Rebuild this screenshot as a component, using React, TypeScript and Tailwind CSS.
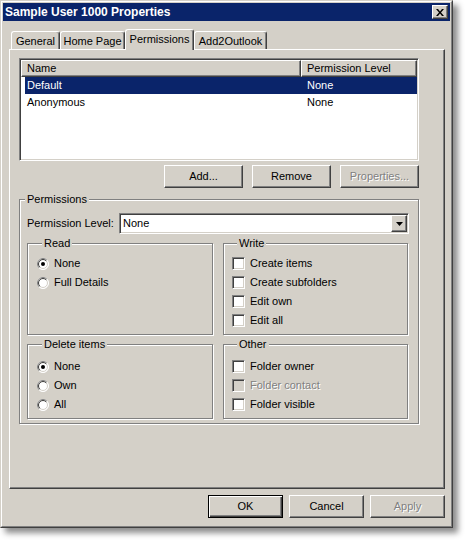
import React from 'react';

// classic 3D bevels
const raised =
  'border border-t-white border-l-white border-r-[#404040] border-b-[#404040] shadow-[inset_-1px_-1px_0_#808080]';
const sunken =
  'border border-t-[#808080] border-l-[#808080] border-r-white border-b-white shadow-[inset_1px_1px_0_#404040,inset_-1px_-1px_0_#d4d0c8]';
const disabledText = 'text-[#808080] [text-shadow:1px_1px_0_#fff]';

interface ButtonProps {
  label: string;
  width: string;
  disabled?: boolean;
  isDefault?: boolean;
}

const Button: React.FC<ButtonProps> = ({ label, width, disabled, isDefault }) => (
  <div
    className={`flex h-[23px] items-center justify-center ${width} ${
      isDefault
        ? 'border border-black shadow-[inset_1px_1px_0_#fff,inset_-1px_-1px_0_#404040,inset_-2px_-2px_0_#808080]'
        : raised
    }`}
  >
    <span className={disabled ? disabledText : ''}>{label}</span>
  </div>
);

const Radio: React.FC<{ label: string; checked?: boolean }> = ({ label, checked }) => (
  <div className="flex h-[19px] items-center gap-[5px]">
    <svg width="12" height="12" viewBox="0 0 12 12" className="shrink-0">
      <circle cx="6" cy="6" r="5.5" fill="#fff" stroke="#fff" />
      <path d="M2.1 9.9 A5.5 5.5 0 0 1 9.9 2.1" fill="none" stroke="#808080" />
      <circle cx="6" cy="6" r="4.5" fill="#fff" stroke="#d4d0c8" />
      <path d="M2.8 9.2 A4.5 4.5 0 0 1 9.2 2.8" fill="none" stroke="#404040" />
      {checked && <circle cx="6" cy="6" r="2" fill="#000" />}
    </svg>
    <span>{label}</span>
  </div>
);

const Check: React.FC<{ label: string; disabled?: boolean }> = ({ label, disabled }) => (
  <div className="flex h-[19px] items-center gap-[5px]">
    <div className={`h-[13px] w-[13px] shrink-0 ${sunken} ${disabled ? 'bg-[#d4d0c8]' : 'bg-white'}`} />
    <span className={disabled ? disabledText : ''}>{label}</span>
  </div>
);

const Group: React.FC<{ title: string; className?: string; children: React.ReactNode }> = ({
  title,
  className = '',
  children,
}) => (
  <fieldset
    className={`border border-[#808080] shadow-[inset_1px_1px_0_#fff,1px_1px_0_#fff] ${className}`}
  >
    <legend className="ml-[5px] bg-[#d4d0c8] px-[2px] leading-[13px]">{title}</legend>
    {children}
  </fieldset>
);

const tabs = [
  { name: 'General', w: 'w-[49px]' },
  { name: 'Home Page', w: 'w-[65px]' },
  { name: 'Permissions', w: 'w-[69px]', active: true },
  { name: 'Add2Outlook', w: 'w-[73px]' },
];

const rows = [
  { name: 'Default', level: 'None', selected: true },
  { name: 'Anonymous', level: 'None' },
];

export default function App() {
  return (
    <div className="h-[540px] w-[466px] bg-white font-['Liberation_Sans',Arial,sans-serif] text-[11px] text-black">
      <div className="flex h-[528px] w-[453px] flex-col border border-[#d4d0c8] border-r-[#404040] border-b-[#404040] bg-[#d4d0c8] shadow-[5px_5px_6px_rgba(0,0,0,0.45)]">
        <div className="flex flex-1 flex-col border border-white border-r-[#808080] border-b-[#808080] p-px">
          {/* Title bar */}
          <div className="flex h-[18px] items-center justify-between bg-[#0a246a] pl-[2px] pr-[2px]">
            <span className="text-[12px] font-bold text-white">Sample User 1000 Properties</span>
            <div className={`flex h-[14px] w-[16px] items-center justify-center bg-[#d4d0c8] ${raised}`}>
              <svg width="8" height="7" viewBox="0 0 8 7">
                <path d="M0 0h2l2 2.5L6 0h2L5 3.5 8 7H6L4 4.5 2 7H0l3-3.5z" fill="#000" />
              </svg>
            </div>
          </div>

          {/* Tabs */}
          <div className="ml-[8px] mt-[8px] flex h-[20px] items-end">
            {tabs.map((t) => (
              <div
                key={t.name}
                className={`flex items-center justify-center rounded-t-[3px] border-l border-t border-r border-l-white border-t-white border-r-[#404040] bg-[#d4d0c8] shadow-[inset_-1px_0_0_#808080] ${t.w} ${
                  t.active ? 'relative z-10 -mb-px h-[21px] pb-px' : 'h-[18px] pt-px'
                }`}
              >
                {t.name}
              </div>
            ))}
          </div>

          {/* Tab panel */}
          <div className="ml-[6px] mr-[5px] h-[440px] border border-t-white border-l-white border-r-[#404040] border-b-[#404040] shadow-[inset_-1px_-1px_0_#808080]">
            <div className="ml-[9px] mt-[8px] w-[400px]">
              {/* List view */}
              <div className={`h-[103px] bg-white p-px ${sunken}`}>
                <div className="flex h-[17px]">
                  <div className={`flex w-[280px] items-center bg-[#d4d0c8] pl-[5px] ${raised}`}>Name</div>
                  <div className={`flex flex-1 items-center bg-[#d4d0c8] pl-[5px] ${raised}`}>Permission Level</div>
                </div>
                <div className="pl-[4px]">
                  {rows.map((r) => (
                    <div
                      key={r.name}
                      className={`flex h-[17px] items-center ${r.selected ? 'bg-[#0a246a] text-white' : ''}`}
                    >
                      <div className="w-[276px] pl-[2px]">{r.name}</div>
                      <div className="pl-[6px]">{r.level}</div>
                    </div>
                  ))}
                </div>
              </div>

              {/* List buttons */}
              <div className="mt-[4px] flex justify-end gap-[9px]">
                <Button label="Add..." width="w-[79px]" />
                <Button label="Remove" width="w-[79px]" />
                <Button label="Properties..." width="w-[79px]" disabled />
              </div>

              {/* Permissions group */}
              <Group title="Permissions" className="mt-[5px] h-[231px]">
                <div className="mt-[7px] flex items-center pl-[7px]">
                  <span className="w-[92px]">Permission Level:</span>
                  <div className={`flex h-[21px] w-[290px] bg-white p-px ${sunken}`}>
                    <span className="flex flex-1 items-center pl-[2px]">None</span>
                    <div className={`flex h-full w-[16px] items-center justify-center bg-[#d4d0c8] ${raised}`}>
                      <svg width="7" height="4" viewBox="0 0 7 4">
                        <path d="M0 0h7L3.5 4z" fill="#000" />
                      </svg>
                    </div>
                  </div>
                </div>

                <div className="ml-[7px] mt-[3px] grid w-[381px] grid-cols-[186px_185px] gap-x-[10px] gap-y-[3px]">
                  <Group title="Read" className="h-[98px] pl-[9px] pt-[4px]">
                    <Radio label="None" checked />
                    <Radio label="Full Details" />
                  </Group>
                  <Group title="Write" className="h-[98px] pl-[8px] pt-[4px]">
                    <Check label="Create items" />
                    <Check label="Create subfolders" />
                    <Check label="Edit own" />
                    <Check label="Edit all" />
                  </Group>
                  <Group title="Delete items" className="h-[81px] pl-[9px] pt-[6px]">
                    <Radio label="None" checked />
                    <Radio label="Own" />
                    <Radio label="All" />
                  </Group>
                  <Group title="Other" className="h-[81px] pl-[8px] pt-[6px]">
                    <Check label="Folder owner" />
                    <Check label="Folder contact" disabled />
                    <Check label="Folder visible" />
                  </Group>
                </div>
              </Group>
            </div>
          </div>

          {/* Dialog buttons */}
          <div className="mr-[5px] mt-[6px] flex justify-end gap-[6px]">
            <Button label="OK" width="w-[75px]" isDefault />
            <Button label="Cancel" width="w-[75px]" />
            <Button label="Apply" width="w-[75px]" disabled />
          </div>
        </div>
      </div>
    </div>
  );
}
